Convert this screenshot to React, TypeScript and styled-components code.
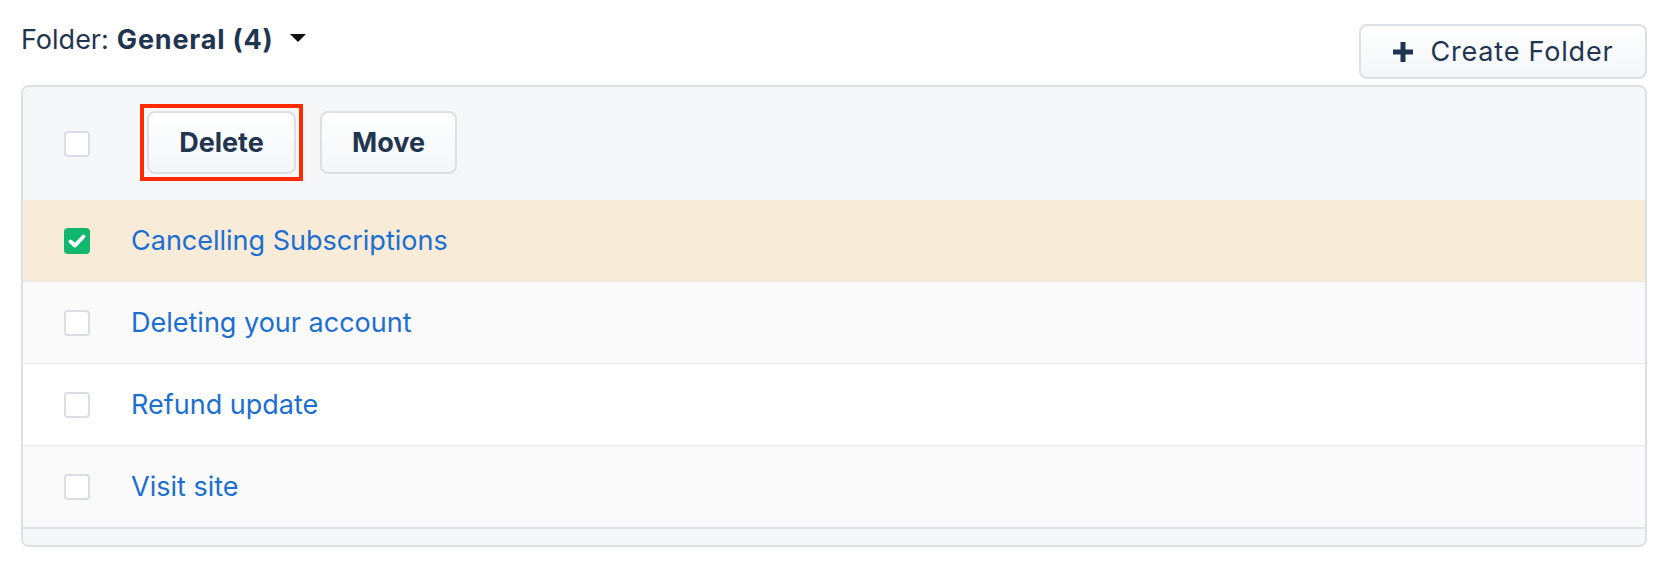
import React from "react";
import styled, { createGlobalStyle, css } from "styled-components";

const GlobalStyle = createGlobalStyle`
  body {
    margin: 0;
    background: #ffffff;
    font-family: Inter, "Liberation Sans", Arial, sans-serif;
    color: #1f3550;
  }
`;

const Page = styled.div`
  padding: 24px 21px 0;
`;

const TopBar = styled.div`
  display: flex;
  justify-content: space-between;
  align-items: flex-start;
`;

const FolderLabel = styled.div`
  display: flex;
  align-items: center;
  font-size: 27px;
  line-height: 32px;
  color: #1f3550;
`;

const FolderName = styled.span`
  font-weight: 700;
  margin-left: 8px;
  letter-spacing: 0.8px;
`;

const Caret = styled.svg`
  margin-left: 16px;
  margin-top: -4px;
`;

const Button = styled.button<{ $highlight?: boolean; $width: number; $height: number }>`
  position: relative;
  box-sizing: border-box;
  display: inline-flex;
  align-items: center;
  justify-content: center;
  gap: 18px;
  width: ${({ $width }) => $width}px;
  height: ${({ $height }) => $height}px;
  border: 2px solid #dbe0e5;
  border-radius: 8px;
  background: linear-gradient(#ffffff, #f3f5f7);
  font-family: inherit;
  font-size: 27px;
  color: #1f3550;
  cursor: pointer;
  padding: 0;

  ${({ $highlight }) =>
    $highlight &&
    css`
      &::after {
        content: "";
        position: absolute;
        inset: -9px;
        border: 4px solid #ff2a00;
      }
    `}
`;

const BoldLabel = styled.span`
  font-weight: 700;
`;

const RegularLabel = styled.span`
  letter-spacing: 0.8px;
`;

const Panel = styled.div`
  margin-top: 6px;
  border: 2px solid #dce0e5;
  border-radius: 8px;
  overflow: hidden;
  background: #f6f7f9;
`;

const Header = styled.div`
  display: flex;
  align-items: center;
  height: 113px;
  padding-left: 41px;
  background: #f6f7f9;
`;

const HeaderActions = styled.div`
  display: flex;
  gap: 24px;
  margin-left: 57px;
  margin-top: -3px;
`;

const Row = styled.div<{ $tone: "selected" | "odd" | "even"; $first?: boolean }>`
  display: flex;
  align-items: center;
  gap: 41px;
  height: 81px;
  padding-left: 41px;
  border-top: ${({ $first }) => ($first ? "none" : "1px solid #e6e8eb")};
  background: ${({ $tone }) =>
    $tone === "selected" ? "#f8ebd8" : $tone === "odd" ? "#fafafa" : "#ffffff"};
`;

const ArticleLink = styled.a`
  font-size: 27px;
  color: #1a6fd0;
  text-decoration: none;
  cursor: pointer;
`;

const Footer = styled.div`
  height: 16px;
  border-top: 2px solid #dde1e5;
  background: #f6f7f9;
`;

const Box = styled.span<{ $checked?: boolean }>`
  box-sizing: border-box;
  display: inline-flex;
  align-items: center;
  justify-content: center;
  width: 26px;
  height: 26px;
  flex-shrink: 0;
  border-radius: 4px;
  ${({ $checked }) =>
    $checked
      ? css`
          background: #12b76e;
        `
      : css`
          background: #ffffff;
          border: 2px solid #dadee3;
        `}
`;

const Checkbox = ({ checked }: { checked?: boolean }) => (
  <Box $checked={checked}>
    {checked && (
      <svg width="20" height="20" viewBox="0 0 20 20">
        <path d="M3.5 10.5 L8 14.5 L16.5 5.5" fill="none" stroke="#ffffff" strokeWidth="4" strokeLinecap="round" strokeLinejoin="round" />
      </svg>
    )}
  </Box>
);

const PlusIcon = () => (
  <svg width="20" height="20" viewBox="0 0 20 20">
    <rect x="7.5" y="0" width="5" height="20" fill="#1f3550" />
    <rect x="0" y="7.5" width="20" height="5" fill="#1f3550" />
  </svg>
);

const articles = [
  { title: "Cancelling Subscriptions", checked: true },
  { title: "Deleting your account", checked: false },
  { title: "Refund update", checked: false },
  { title: "Visit site", checked: false },
];

export default function App() {
  return (
    <>
      <GlobalStyle />
      <Page>
        <TopBar>
          <FolderLabel>
            Folder:<FolderName>General (4)</FolderName>
            <Caret width="16" height="8" viewBox="0 0 16 8">
              <path d="M0 0 H16 L8 8 Z" fill="#111111" />
            </Caret>
          </FolderLabel>
          <Button $width={288} $height={55}>
            <PlusIcon />
            <RegularLabel>Create Folder</RegularLabel>
          </Button>
        </TopBar>
        <Panel>
          <Header>
            <Checkbox />
            <HeaderActions>
              <Button $width={149} $height={63} $highlight>
                <BoldLabel>Delete</BoldLabel>
              </Button>
              <Button $width={137} $height={63}>
                <BoldLabel>Move</BoldLabel>
              </Button>
            </HeaderActions>
          </Header>
          {articles.map((a, i) => (
            <Row
              key={a.title}
              $first={i === 0}
              $tone={a.checked ? "selected" : i % 2 === 1 ? "odd" : "even"}
            >
              <Checkbox checked={a.checked} />
              <ArticleLink>{a.title}</ArticleLink>
            </Row>
          ))}
          <Footer />
        </Panel>
      </Page>
    </>
  );
}
